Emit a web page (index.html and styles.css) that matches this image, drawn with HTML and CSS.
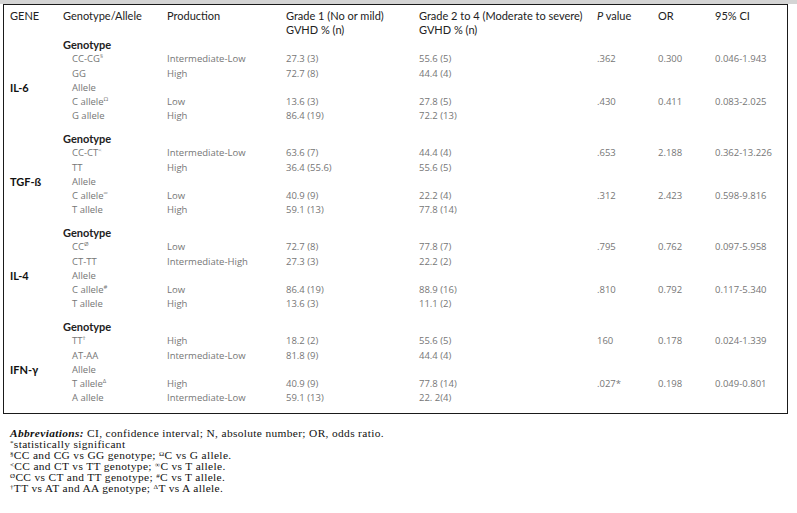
FILE: index.html
```html
<!DOCTYPE html>
<html lang="en">
<head>
<meta charset="utf-8">
<title>Cytokine gene polymorphisms and GVHD</title>
<link rel="stylesheet" href="styles.css">
</head>
<body>
<div class="topbar"></div>
<div class="table">
  <div class="row head">
    <div>GENE</div>
    <div>Genotype/Allele</div>
    <div>Production</div>
    <div>Grade 1 (No or mild)<br>GVHD % (n)</div>
    <div>Grade 2 to 4 (Moderate to severe)<br>GVHD % (n)</div>
    <div><i>P</i> value</div>
    <div>OR</div>
    <div>95% CI</div>
  </div>

  <div class="section">
    <div class="row"><div></div><div class="sub">Genotype</div></div>
    <div class="row d"><div></div><div class="it">CC-CG<sup>§</sup></div><div>Intermediate-Low</div><div>27.3 (3)</div><div>55.6 (5)</div><div>.362</div><div>0.300</div><div>0.046-1.943</div></div>
    <div class="row d"><div></div><div class="it">GG</div><div>High</div><div>72.7 (8)</div><div>44.4 (4)</div></div>
    <div class="row d"><div class="gene">IL-6</div><div class="it">Allele</div></div>
    <div class="row d"><div></div><div class="it">C allele<sup>Ω</sup></div><div>Low</div><div>13.6 (3)</div><div>27.8 (5)</div><div>.430</div><div>0.411</div><div>0.083-2.025</div></div>
    <div class="row d"><div></div><div class="it">G allele</div><div>High</div><div>86.4 (19)</div><div>72.2 (13)</div></div>
  </div>

  <div class="section">
    <div class="row"><div></div><div class="sub">Genotype</div></div>
    <div class="row d"><div></div><div class="it">CC-CT<sup>&lt;</sup></div><div>Intermediate-Low</div><div>63.6 (7)</div><div>44.4 (4)</div><div>.653</div><div>2.188</div><div>0.362-13.226</div></div>
    <div class="row d"><div></div><div class="it warm">TT</div><div>High</div><div>36.4 (55.6)</div><div>55.6 (5)</div></div>
    <div class="row d"><div class="gene">TGF-ß</div><div class="it">Allele</div></div>
    <div class="row d"><div></div><div class="it">C allele<sup>∞</sup></div><div>Low</div><div>40.9 (9)</div><div>22.2 (4)</div><div>.312</div><div>2.423</div><div>0.598-9.816</div></div>
    <div class="row d"><div></div><div class="it">T allele</div><div>High</div><div>59.1 (13)</div><div>77.8 (14)</div></div>
  </div>

  <div class="section">
    <div class="row"><div></div><div class="sub">Genotype</div></div>
    <div class="row d"><div></div><div class="it">CC<sup>Ø</sup></div><div>Low</div><div>72.7 (8)</div><div>77.8 (7)</div><div>.795</div><div>0.762</div><div>0.097-5.958</div></div>
    <div class="row d"><div></div><div class="it">CT-TT</div><div>Intermediate-High</div><div>27.3 (3)</div><div>22.2 (2)</div></div>
    <div class="row d"><div class="gene">IL-4</div><div class="it">Allele</div></div>
    <div class="row d"><div></div><div class="it">C allele<sup>#</sup></div><div>Low</div><div>86.4 (19)</div><div>88.9 (16)</div><div>.810</div><div>0.792</div><div>0.117-5.340</div></div>
    <div class="row d"><div></div><div class="it">T allele</div><div>High</div><div>13.6 (3)</div><div>11.1 (2)</div></div>
  </div>

  <div class="section">
    <div class="row"><div></div><div class="sub">Genotype</div></div>
    <div class="row d"><div></div><div class="it warm">TT<sup>†</sup></div><div>High</div><div>18.2 (2)</div><div>55.6 (5)</div><div>160</div><div>0.178</div><div>0.024-1.339</div></div>
    <div class="row d"><div></div><div class="it">AT-AA</div><div>Intermediate-Low</div><div>81.8 (9)</div><div>44.4 (4)</div></div>
    <div class="row d"><div class="gene">IFN-γ</div><div class="it">Allele</div></div>
    <div class="row d"><div></div><div class="it">T allele<sup>Δ</sup></div><div>High</div><div>40.9 (9)</div><div>77.8 (14)</div><div>.027*</div><div>0.198</div><div>0.049-0.801</div></div>
    <div class="row d"><div></div><div class="it">A allele</div><div>Intermediate-Low</div><div>59.1 (13)</div><div>22. 2(4)</div></div>
  </div>
</div>

<div class="notes">
  <p><b><i>Abbreviations:</i></b> CI, confidence interval; N, absolute number; OR, odds ratio.</p>
  <p><sup>*</sup>statistically significant</p>
  <p><sup>§</sup>CC and CG vs GG genotype; <sup>Ω</sup>C vs G allele.</p>
  <p><sup>&lt;</sup>CC and CT vs TT genotype; <sup>∞</sup>C vs T allele.</p>
  <p><sup>Ø</sup>CC vs CT and TT genotype; <sup>#</sup>C vs T allele.</p>
  <p><sup>†</sup>TT vs AT and AA genotype; <sup>Δ</sup>T vs A allele.</p>
</div>
</body>
</html>
```

FILE: styles.css
```css
html, body {
  margin: 0;
  padding: 0;
  background: #ffffff;
}

.topbar {
  height: 4px;
  background: #d4d4d4;
}

.table {
  box-sizing: border-box;
  width: 785px;
  margin-left: 3px;
  border: 1px solid #1a1a1a;
  padding: 0 0 7px 6px;
  font-family: "Lato", "Open Sans", sans-serif;
  font-size: 11px;
  color: #222222;
}

.row {
  display: grid;
  grid-template-columns: 53px 104px 119px 133px 178px 61px 57px 1fr;
  height: 14.25px;
  align-items: center;
  line-height: 14px;
  white-space: nowrap;
}

.row.head {
  height: 33px;
  align-items: start;
  padding-top: 4px;
  box-sizing: border-box;
  line-height: 13.5px;
}

.section + .section {
  margin-top: 8.5px;
}

.sub {
  font-weight: 700;
  color: #222222;
}

.gene {
  font-weight: 700;
  color: #111111;
}

.row.d > div:not(.gene) {
  font-family: "Open Sans", "Lato", sans-serif;
  font-size: 9.5px;
  color: #767676;
}

.it {
  padding-left: 9px;
}

.row.d > .warm {
  color: #b87460;
}

sup {
  font-size: 6px;
  line-height: 0;
  vertical-align: 4px;
}

.notes {
  margin: 14px 0 0 10px;
  font-family: "Liberation Serif", "Times New Roman", serif;
  font-size: 11.4px;
  line-height: 11.1px;
  letter-spacing: 0.35px;
  color: #111111;
}

.notes p {
  margin: 0;
}

.notes sup {
  font-size: 7px;
  vertical-align: 3px;
}
```
